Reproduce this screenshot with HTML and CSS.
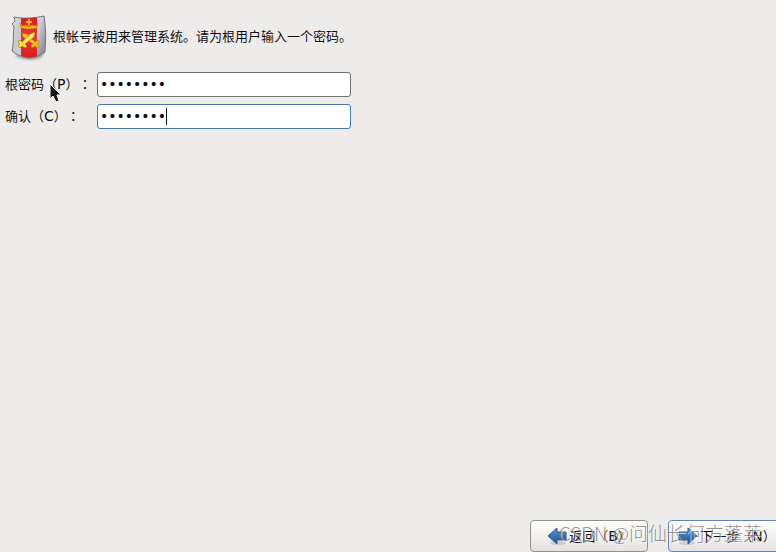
FILE: index.html
```html
<!DOCTYPE html>
<html lang="zh-CN">
<head>
  <meta charset="UTF-8">
  <title>根密码</title>
  <link rel="stylesheet" href="styles.css">
</head>
<body>

  <form class="installer">
    <!-- 说明 -->
    <div class="intro">
      <svg class="shield" width="38" height="48" viewBox="0 0 38 48" aria-hidden="true">
        <defs>
          <linearGradient id="silver" x1="0" y1="0" x2="1" y2="0.4">
            <stop offset="0" stop-color="#e6e6e9"/>
            <stop offset="0.3" stop-color="#c9c9cf"/>
            <stop offset="0.75" stop-color="#d0ced6"/>
            <stop offset="1" stop-color="#96949b"/>
          </linearGradient>
          <linearGradient id="red" x1="0" y1="0" x2="0" y2="1">
            <stop offset="0" stop-color="#d51518"/>
            <stop offset="0.5" stop-color="#ee3438"/>
            <stop offset="1" stop-color="#d8191d"/>
          </linearGradient>
          <filter id="soft" x="-20%" y="-100%" width="140%" height="300%">
            <feGaussianBlur stdDeviation="1"/>
          </filter>
          <clipPath id="body">
            <path d="M4 4 C13 6 25 5 34 3 C36 14 36 27 35 39 C30 43 24 45 19 45 C14 45 7 42 2 38 C4 29 3 19 4 13 L2 11 L5 8 Z"/>
          </clipPath>
        </defs>
        <path d="M4 40 Q19 48 35 40 L30 45 Q19 49 7 44 Z" fill="#666" opacity="0.6" filter="url(#soft)"/>
        <g clip-path="url(#body)">
          <rect width="38" height="48" fill="url(#silver)"/>
          <rect x="11" width="16" height="48" fill="url(#red)"/>
        </g>
        <path d="M4 4 C13 6 25 5 34 3 C36 14 36 27 35 39 C30 43 24 45 19 45 C14 45 7 42 2 38 C4 29 3 19 4 13 L2 11 L5 8 Z" fill="none" stroke="#77757b"/>
        <path d="M19 6 V13 M16 9 H22" stroke="#ffd52c" stroke-width="1.3"/>
        <path d="M10 10 L12 13 L16 12 L19 14 L22 12 L26 13 L28 10 L27 15 Q19 17 11 15 Z" fill="#f5ba16" stroke="#b67900" stroke-width="0.5"/>
        <g stroke="#a97800" stroke-width="0.6" stroke-linejoin="round">
          <path d="M12 20 L17 21 L25 29 L28 27 L29 29 L27 31 L29 33 L27 35 L25 33 L22 35 L21 32 L23 31 L13 24 Z" fill="#f3c21d"/>
          <path d="M25 19 L20 21 L12 29 L9 27 L8 29 L10 31 L8 33 L10 35 L12 33 L15 35 L17 33 L15 31 L24 24 Z" fill="#ffe345"/>
        </g>
        <path d="M23 21 L14 30" stroke="#fff6a1"/>
      </svg>
      <p>根帐号被用来管理系统。请为根用户输入一个密码。</p>
    </div>

    <!-- 密码输入 -->
    <div class="fields">
      <label for="password">根密码（<span class="key">P</span>）<span class="colon" lang="zh-TW">：</span></label>
      <div class="entry">
        <input type="password" id="password" value="password">
      </div>
      <label for="confirm">确认（<span class="key">C</span>）<span class="colon" lang="zh-TW">：</span></label>
      <div class="entry">
        <input type="password" id="confirm" class="active" value="password">
        <span class="caret"></span>
      </div>
    </div>

    <!-- 导航按钮 -->
    <div class="actions">
      <button type="button">
        <svg width="20" height="20" viewBox="0 0 20 20" aria-hidden="true">
          <defs>
            <linearGradient id="blue" x1="0" y1="0" x2="0" y2="1">
              <stop offset="0" stop-color="#5f95cf"/>
              <stop offset="1" stop-color="#1d5294"/>
            </linearGradient>
          </defs>
          <ellipse cx="11" cy="17" rx="8" ry="2" fill="#777" opacity="0.25"/>
          <path d="M1 10 L10 2 V6 H19 V14 H10 V18 Z" fill="url(#blue)" stroke="#2f5f98"/>
        </svg>
        <span>返回（<span class="key">B</span>）</span>
      </button>
      <button type="button" class="next">
        <svg width="20" height="20" viewBox="0 0 20 20" aria-hidden="true">
          <ellipse cx="9" cy="17" rx="8" ry="2" fill="#777" opacity="0.25"/>
          <path d="M19 10 L10 2 V6 H1 V14 H10 V18 Z" fill="url(#blue)" stroke="#2f5f98"/>
        </svg>
        <span>下一步（<span class="key">N</span>）</span>
      </button>
    </div>
  </form>

  <svg class="pointer" width="14" height="20" viewBox="0 0 14 20" aria-hidden="true">
    <path d="M1 1 V16 L4 13 L7 19 L10 18 L8 12 H12 Z" fill="#111" stroke="#fff"/>
  </svg>
  <div class="watermark">CSDN @问仙长何方蓬莱</div>

</body>
</html>
```

FILE: styles.css
```css
* {
  box-sizing: border-box;
}
body {
  margin: 0;
  background-color: #edeceb;
  color: #111;
  font: 13px/20px "DejaVu Sans", "Noto Sans CJK SC", sans-serif;
  text-spacing-trim: space-all;
  overflow: hidden;
}
.installer {
  position: relative;
  display: flex;
  flex-direction: column;
  min-height: 100vh;
}
.intro {
  display: flex;
  align-items: center;
  gap: 5px;
  padding: 13px 10px 11px;
}
.intro p {
  margin: 0;
}
.shield {
  flex: none;
}
.fields {
  display: grid;
  grid-template-columns: 86px minmax(0, 254px);
  gap: 7px 6px;
  align-items: center;
  padding-left: 5px;
}
label {
  white-space: nowrap;
}
.key {
  font-size: 14px;
}
.colon {
  font-family: "Noto Sans CJK TC", sans-serif;
}
.entry {
  position: relative;
}
input {
  display: block;
  width: 100%;
  height: 25px;
  padding: 1px 2px 2px;
  border: 1px solid #72706d;
  border-radius: 3px;
  background-color: #fff;
  color: #111;
  font: 14px/20px "DejaVu Sans", sans-serif;
  outline: none;
}
input.active {
  border-color: #4776ad;
}
.caret {
  position: absolute;
  top: 4px;
  left: 69px;
  width: 1px;
  height: 17px;
  background-color: #111;
}
.actions {
  display: flex;
  justify-content: flex-end;
  gap: 20px;
  margin-top: auto;
  margin-right: -10px;
}
button {
  display: flex;
  align-items: center;
  justify-content: center;
  gap: 2px;
  width: 118px;
  height: 32px;
  padding: 0;
  border: 1px solid #94918d;
  border-radius: 4px;
  background: linear-gradient(#fff, #f2f1f0 50%, #e4e2e0);
  color: #111;
  font: inherit;
  white-space: nowrap;
}
button.next {
  border-color: #6286b4;
}
.pointer {
  position: absolute;
  top: 83px;
  left: 49px;
}
.watermark {
  position: absolute;
  right: 14px;
  bottom: 5px;
  color: rgba(120, 120, 120, 0.8);
  font: 300 19px/28px "Noto Sans CJK SC", sans-serif;
  text-shadow: 1px 1px 0 rgba(255, 255, 255, 0.6);
  white-space: nowrap;
  pointer-events: none;
}
```
